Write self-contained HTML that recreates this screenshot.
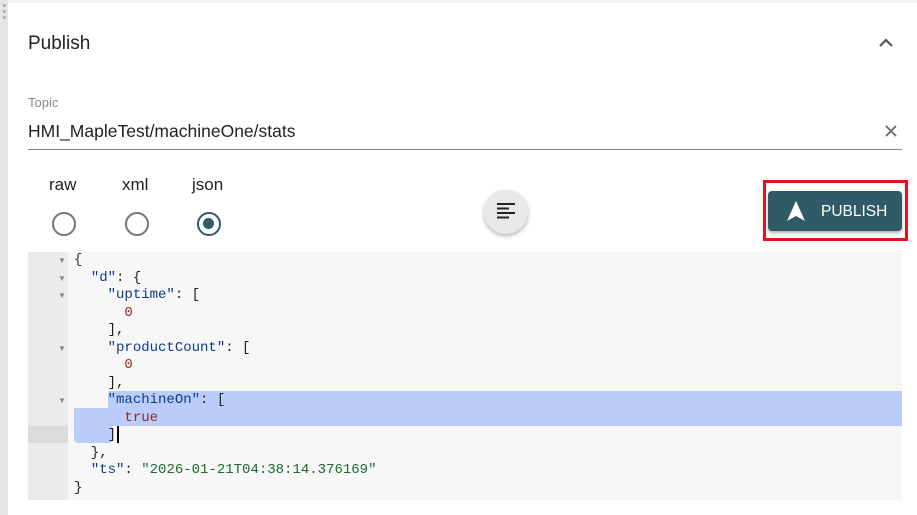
<!DOCTYPE html>
<html><head><style>
*{margin:0;padding:0;box-sizing:border-box}
body{width:917px;height:515px;background:#fff;position:relative;overflow:hidden;font-family:"Liberation Sans",sans-serif;color:#212121}
.abs{position:absolute}
.code{font-family:"Liberation Mono",monospace;font-size:14px;line-height:17.5px;white-space:pre}
.k{color:#0b3c8c}.s{color:#1a6b2e}.n{color:#8b2a2a}.p{color:#333}
.radio{position:absolute;width:24px;height:24px;border:2.5px solid #757575;border-radius:50%;top:212px}
.arr{position:absolute;left:32px;color:#888;font-size:8px}
</style></head><body>
<div class="abs" style="left:0;top:0;width:8px;height:515px;background:#e6e6e6"></div>
<div class="abs" style="left:3px;top:4px;width:3px;height:3px;background:#aaa;border-radius:50%"></div>
<div class="abs" style="left:3px;top:10px;width:3px;height:3px;background:#aaa;border-radius:50%"></div>
<div class="abs" style="left:3px;top:16px;width:3px;height:3px;background:#aaa;border-radius:50%"></div>
<div class="abs" style="left:8px;top:0;width:909px;height:3px;background:#f3f3f3"></div>
<div class="abs" style="left:28px;top:33px;font-size:19px;color:#222">Publish</div>
<svg class="abs" style="left:878px;top:36px" width="16" height="12" viewBox="0 0 16 12"><path d="M2 10 L8 4 L14 10" stroke="#555" stroke-width="2.2" fill="none"/></svg>
<div class="abs" style="left:28px;top:95px;font-size:13px;color:#888">Topic</div>
<div class="abs" style="left:28px;top:121px;font-size:17.5px;color:#222">HMI_MapleTest/machineOne/stats</div>
<svg class="abs" style="left:884px;top:124px" width="14" height="14" viewBox="0 0 14 14"><path d="M2 2 L12 12 M12 2 L2 12" stroke="#666" stroke-width="1.8"/></svg>
<div class="abs" style="left:28px;top:149px;width:874px;height:1px;background:#8a8a8a"></div>
<div class="abs" style="left:49px;top:175px;font-size:17px">raw</div>
<div class="abs" style="left:122px;top:175px;font-size:17px">xml</div>
<div class="abs" style="left:192px;top:175px;font-size:17px">json</div>
<div class="radio" style="left:52px"></div>
<div class="radio" style="left:125px"></div>
<div class="radio" style="left:197px;border-color:#2f5b66"><div style="position:absolute;left:4px;top:4px;width:11px;height:11px;border-radius:50%;background:#2f5b66"></div></div>
<div class="abs" style="left:484px;top:190px;width:44px;height:44px;border-radius:50%;background:#e8e8e8;box-shadow:0 2px 5px rgba(0,0,0,.3)">
<svg style="position:absolute;left:13px;top:13px" width="18" height="18" viewBox="0 0 18 18"><path d="M0 1h18M0 5.5h12M0 10h18M0 14.5h12" stroke="#222" stroke-width="2"/></svg></div>
<div class="abs" style="left:763px;top:180px;width:145px;height:61px;border:3px solid #e0141b"></div>
<div class="abs" style="left:768px;top:191px;width:134px;height:40px;background:#2f5b66;border-radius:4px;box-shadow:0 2px 3px rgba(0,0,0,.3);color:#fff;font-size:15.5px">
<svg style="position:absolute;left:17px;top:9px" width="22" height="22" viewBox="0 0 22 22"><path d="M11 1 L20 21 L11 16 L2 21Z" fill="#fff"/></svg>
<span style="position:absolute;left:53px;top:12px">PUBLISH</span></div>
<div class="abs" style="left:28px;top:252px;width:874px;height:248px;background:#f7f7f7"></div>
<div class="abs" style="left:28px;top:252px;width:40px;height:248px;background:#ebebeb"></div>
<div class="abs" style="left:28px;top:426px;width:40px;height:17px;background:#dcdcdc"></div>
<div class="abs" style="left:108px;top:391px;width:794px;height:17.5px;background:#bacdfa"></div>
<div class="abs" style="left:74px;top:408px;width:828px;height:17.5px;background:#bacdfa"></div>
<div class="abs" style="left:74px;top:425px;width:38px;height:18px;background:#bacdfa;border-bottom-left-radius:4px;border-bottom-right-radius:3px"></div>
<div class="abs" style="left:117px;top:426px;width:1.5px;height:17px;background:#000"></div>
<div class="arr" style="top:256px;left:58px">▼</div>
<div class="arr" style="top:274px;left:58px">▼</div>
<div class="arr" style="top:291px;left:58px">▼</div>
<div class="arr" style="top:344px;left:58px">▼</div>
<div class="arr" style="top:396px;left:58px">▼</div>
<div class="abs code" style="left:74px;top:252px"><span class="p">{</span>
  <span class="k">"d"</span>: {
    <span class="k">"uptime"</span>: [
      <span class="n">0</span>
    ],
    <span class="k">"productCount"</span>: [
      <span class="n">0</span>
    ],
    <span class="k">"machineOn"</span>: [
      <span class="n">true</span>
    ]
  },
  <span class="k">"ts"</span>: <span class="s">"2026-01-21T04:38:14.376169"</span>
}</div>
</body></html>
